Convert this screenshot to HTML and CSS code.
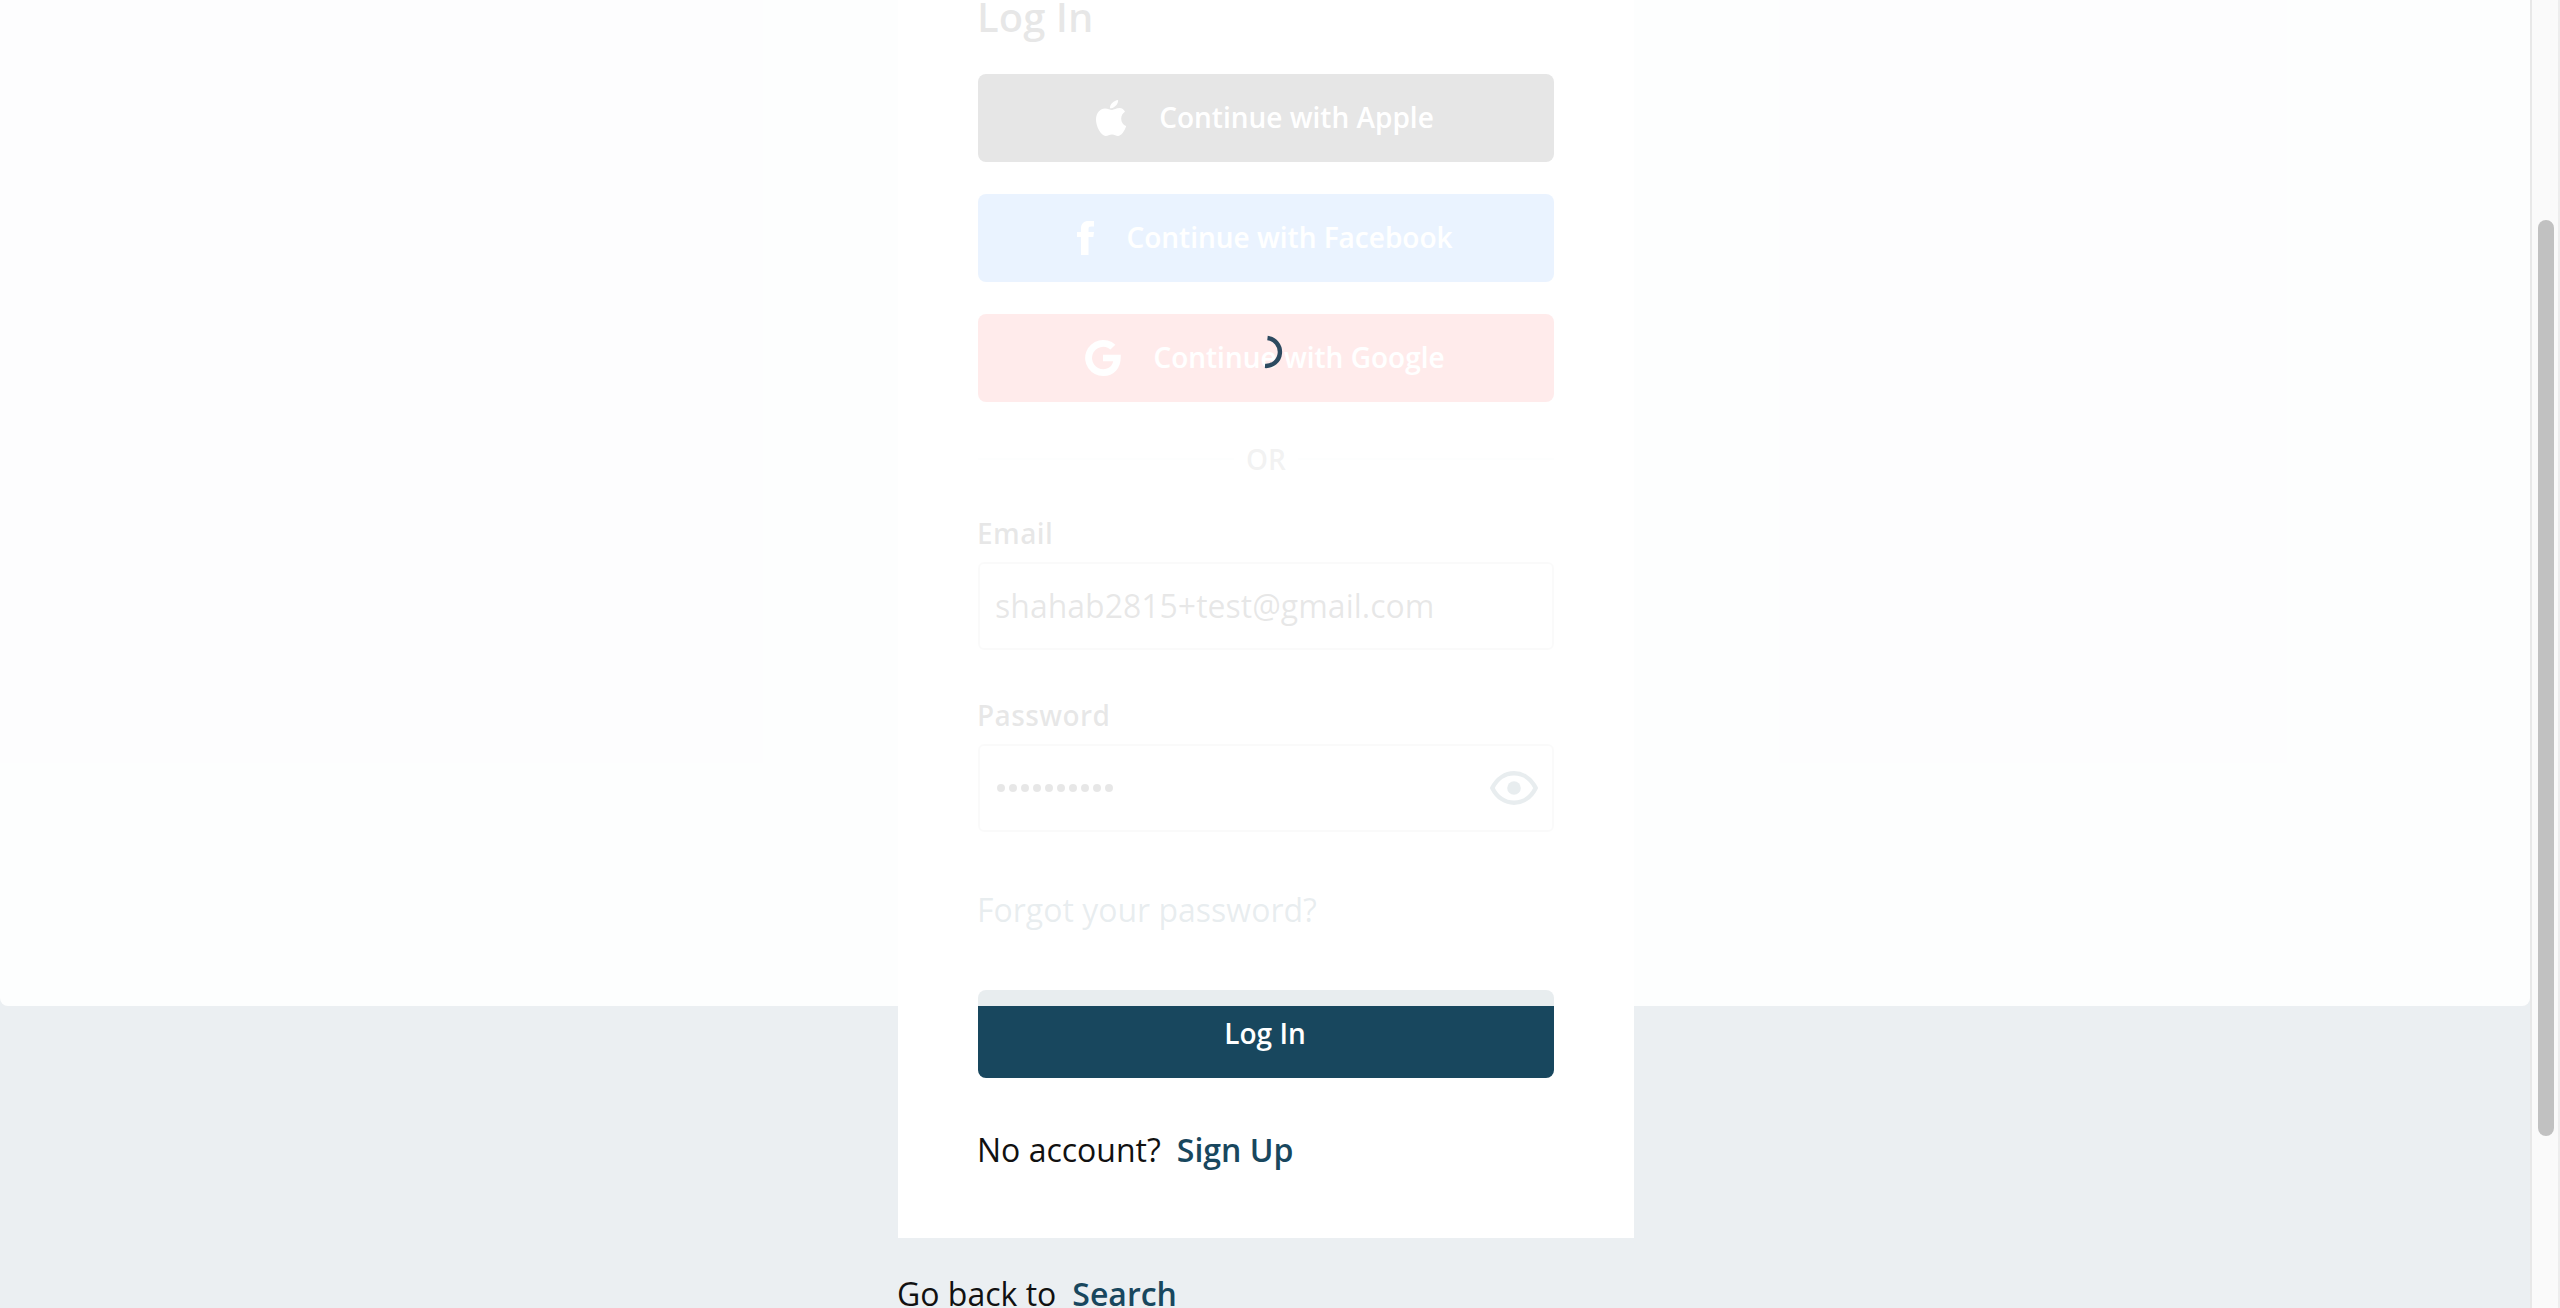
FILE: index.html
```html
<!DOCTYPE html>
<html lang="en">
<head>
<meta charset="utf-8">
<title>Log In</title>
<link rel="stylesheet" href="styles.css">
</head>
<body>
<div class="window">
  <main class="page">
    <section class="card">
      <h1 class="title">Log In</h1>
      <div class="social">
        <button class="btn btn-apple" type="button">
          <svg class="icon-apple" viewBox="0 0 30 36"><path d="M22.1 0C22.4 4 18.6 8.2 14 8.3 13.700 4.200 17.700 .5 22.100 0ZM29 11.800C26.800 13.100 25.200 15.500 25.200 18.700 25.200 22.400 27.300 25 30.200 26.200 28.800 30.300 25.400 36 22 36 19.800 36 18.700 34.600 16 34.600 13.200 34.600 12 36 9.800 36 4.800 36 0 26.700 0 19.600 0 12.500 4.400 8.400 9 8.400 12 8.400 14 10 16 10 17.800 10 20.300 8.100 23.600 8.100 26 8.100 28 9.600 29 11.800Z"/></svg>
          <span>Continue with Apple</span>
        </button>
        <button class="btn btn-facebook" type="button">
          <svg class="icon-facebook" viewBox="0 0 17 34"><path d="M4 34V16H0V11H4V7.500C4 2.500 7 0 11.500 0H17V5.500H14C12 5.500 11.500 6.300 11.500 8V11H17L16.300 16H11.500V34Z"/></svg>
          <span>Continue with Facebook</span>
        </button>
        <button class="btn btn-google" type="button">
          <svg class="icon-google" viewBox="0 0 36 36"><path d="M18 14.700H35.700C36.500 27.500 29.500 36 18.300 36A18 18 0 1 1 30.300 4.700L25.400 9.400A11.200 11.200 0 1 0 18.300 29.200C23.500 29.200 27.200 26.200 28.200 21.300H18Z"/></svg>
          <span>Continue with Google</span>
        </button>
      </div>
      <div class="divider"><span>OR</span></div>
      <label class="label" for="email">Email</label>
      <div class="field"><input class="input" id="email" type="text" value="shahab2815+test@gmail.com"></div>
      <label class="label label-password" for="password">Password</label>
      <div class="field">
        <div class="dots"><i></i><i></i><i></i><i></i><i></i><i></i><i></i><i></i><i></i><i></i></div>
        <svg class="icon-eye" viewBox="0 0 48 34"><path d="M2.300 17C12 -2.600 36 -2.600 45.700 17C36 36.600 12 36.600 2.300 17Z"/><circle cx="24" cy="17" r="6.800"/></svg>
      </div>
      <a class="forgot">Forgot your password?</a>
      <button class="btn btn-login" type="button">Log In</button>
      <p class="signup">No account?<a class="link">Sign Up</a></p>
    </section>
    <p class="back">Go back to<a class="link">Search</a></p>
    <div class="overlay"></div>
    <svg class="spinner" viewBox="0 0 36 36"><path d="M19.500 4.040A14 14 0 0 1 17 31.920"/></svg>
  </main>
  <div class="scrollbar"><div class="thumb"></div></div>
</div>
</body>
</html>
```
FILE: styles.css
```css
* { box-sizing: border-box; }
body {
  margin: 0;
  overflow: hidden;
  font-family: "Open Sans", sans-serif;
  font-size: 32px;
  line-height: 44px;
  color: #111;
}
.window { display: flex; height: 1308px; }
.page {
  position: relative;
  flex: 1;
  overflow: hidden;
  background: #ebeff2;
  padding-left: 898px;
}
.card {
  width: 736px;
  height: 1238px;
  padding: 0 80px;
  background: #fff;
  display: flex;
  flex-direction: column;
}
.title {
  margin: -11px 0 29px -1px;
  font-size: 40px;
  line-height: 56px;
  font-weight: 600;
}
.social { display: flex; flex-direction: column; gap: 32px; }
.btn {
  display: flex;
  align-items: center;
  justify-content: center;
  flex: none;
  height: 88px;
  border: 0;
  border-radius: 8px;
  padding: 0 2px 2px 0;
  color: #fff;
  font: 600 28px/40px "Open Sans", sans-serif;
}
.btn svg { fill: #fff; flex: none; position: relative; top: 1px; }
.btn-apple { background: #000; }
.btn-facebook { background: #2d88ff; }
.btn-google { background: #f93939; }
.icon-apple { width: 30px; height: 36px; margin-right: 33px; }
.icon-facebook { width: 17px; height: 34px; margin-right: 32px; }
.icon-google { width: 36px; height: 36px; margin-right: 32px; }
.divider {
  display: flex;
  align-items: center;
  gap: 12px;
  height: 40px;
  margin: 37px 2px 0 0;
  font-size: 28px;
  font-weight: 600;
  color: #777;
}
.divider::before, .divider::after {
  content: "";
  flex: 1;
  height: 2px;
  background: #ebeff2;
}
.divider::after { margin-right: -2px; }
.label {
  height: 40px;
  margin: 34px 0 9px -1px;
  font-size: 28px;
  line-height: 40px;
  font-weight: 600;
  letter-spacing: .4px;
}
.label-password { margin-top: 45px; }
.field {
  display: flex;
  align-items: center;
  justify-content: space-between;
  flex: none;
  height: 88px;
  padding: 0 14px 0 16px;
  border: 2px solid #ccc;
  border-radius: 6px;
}
.input {
  width: 100%;
  margin-left: -1px;
  padding: 0;
  border: 0;
  outline: 0;
  background: none;
  color: #111;
  font: 32px/44px "Open Sans", sans-serif;
}
.dots { display: flex; gap: 4px; padding-left: 1px; }
.dots i { width: 8px; height: 8px; border-radius: 50%; background: #111; }
.icon-eye { width: 48px; height: 34px; fill: none; stroke: #18475e; stroke-width: 4.400; }
.icon-eye circle { fill: #18475e; stroke: none; }
.forgot { margin: 56px 0 0 -1px; color: #18475e; }
.btn-login { margin-top: 58px; background: #18475e; }
.signup { margin: 50px 0 0 -1px; }
.back { margin: 34px 0 0 -1px; }
.link { margin-left: 16px; font-weight: 600; color: #18475e; }
.overlay {
  position: absolute;
  top: 0;
  left: 0;
  width: 100%;
  height: 1006px;
  background: rgba(255, 255, 255, .9);
  border-radius: 0 0 8px 8px;
}
.spinner {
  position: absolute;
  left: 1248px;
  top: 334px;
  width: 36px;
  height: 36px;
  fill: none;
  stroke: #2c4a60;
  stroke-width: 4.4;
}
.scrollbar {
  width: 30px;
  padding: 220px 0 0 6px;
  background: #fafafa;
  border-left: 2px solid #e8e8e8;
  border-right: 2px solid #ededed;
}
.thumb { width: 16px; height: 916px; border-radius: 8px; background: #c1c1c1; }
```
